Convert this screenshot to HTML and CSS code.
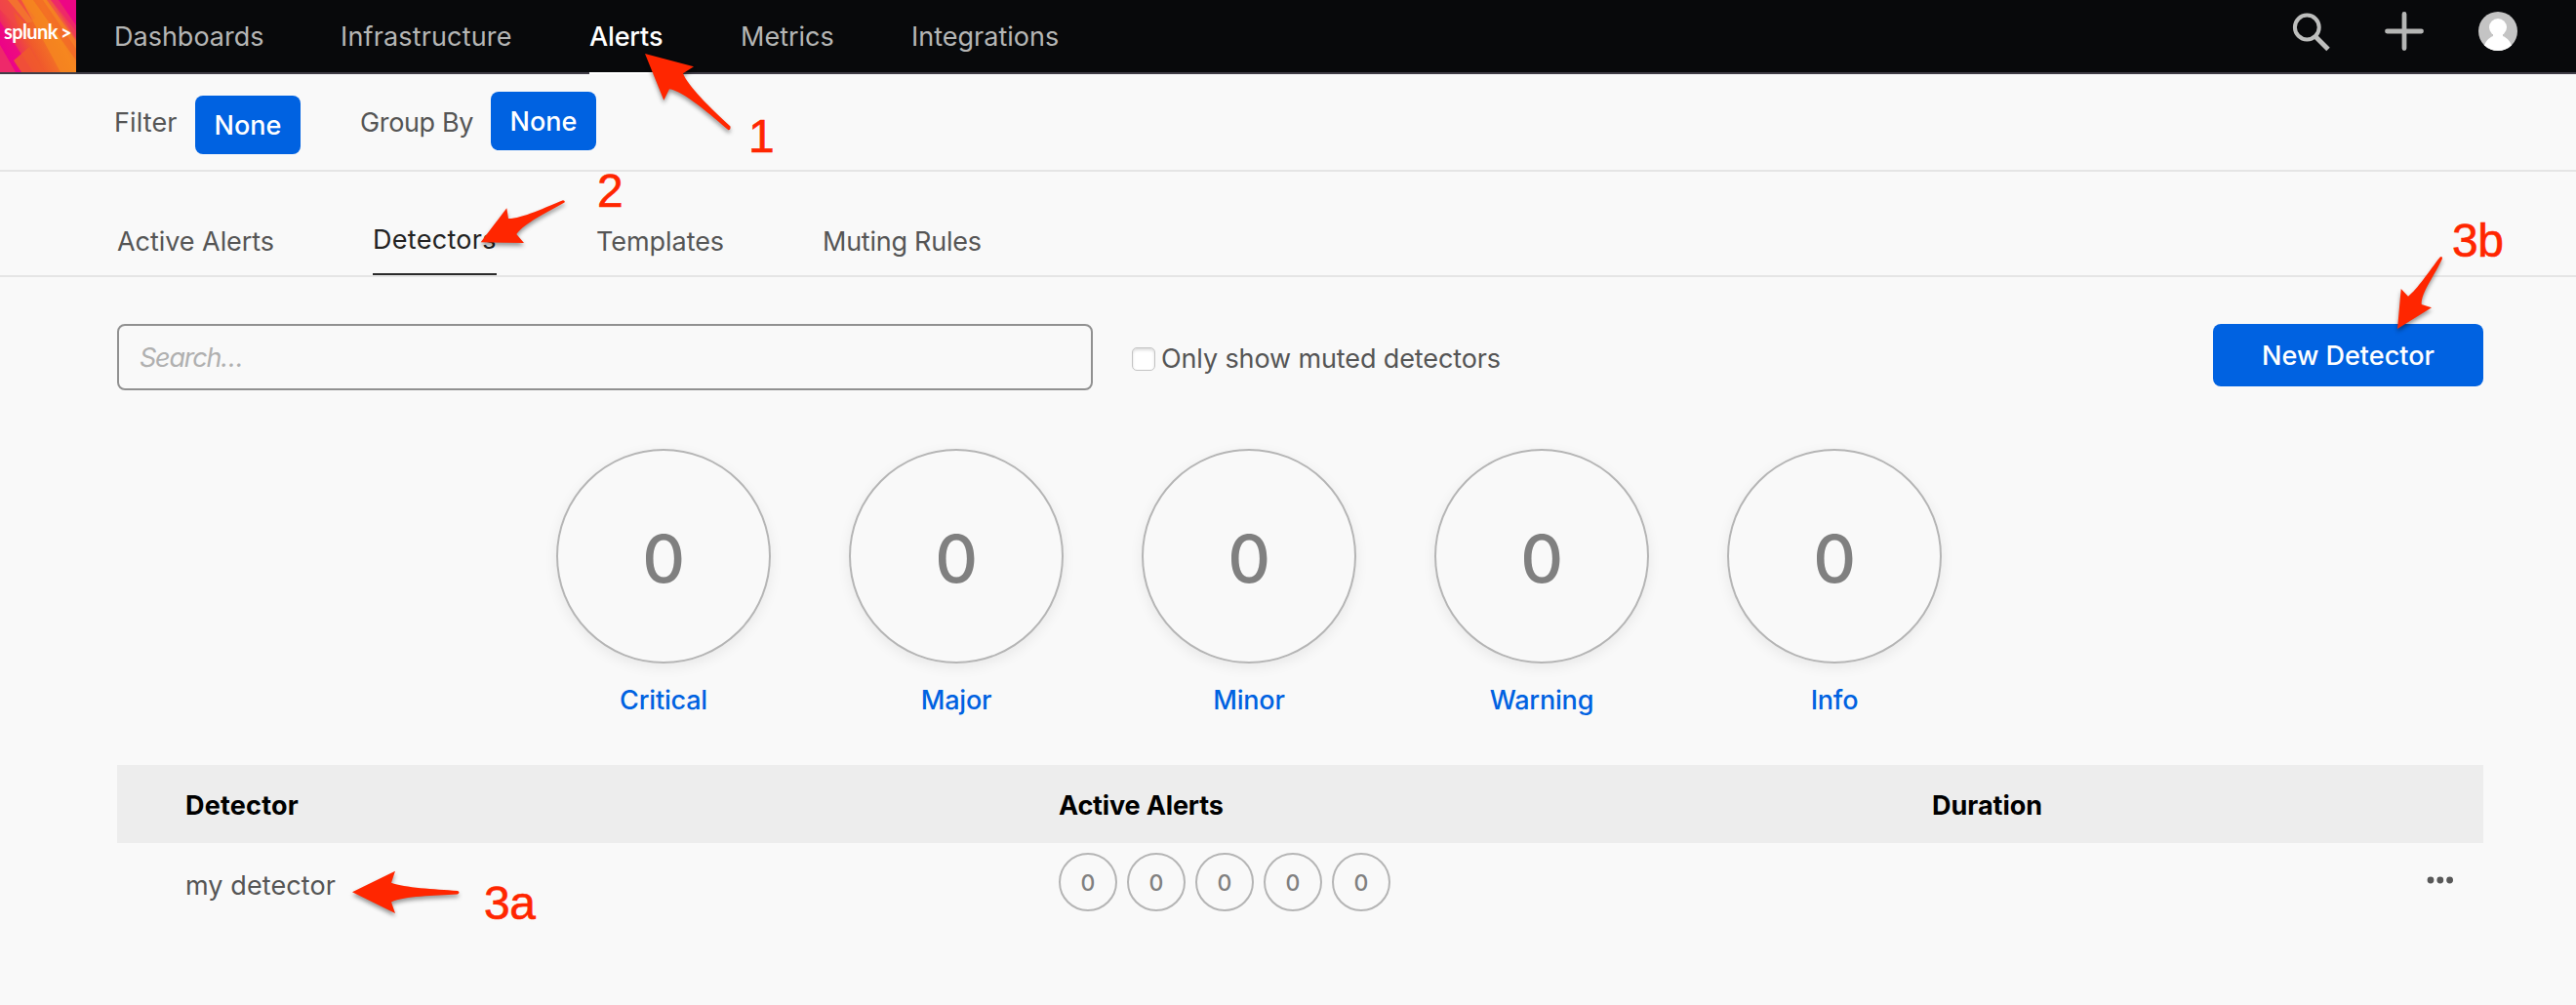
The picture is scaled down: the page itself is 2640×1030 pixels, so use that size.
FILE: index.html
```html
<!DOCTYPE html>
<html lang="en">
<head>
<meta charset="utf-8">
<title>Alerts - Detectors</title>
<link rel="stylesheet" href="styles.css">
</head>
<body>
<header class="topbar">
  <a class="logo">
    <svg class="logo-art" width="78" height="74" viewBox="0 0 78 74">
      <defs>
        <linearGradient id="base" x1="0" y1="0.62" x2="0.9" y2="0.2">
          <stop offset="0" stop-color="#ec0a80"/><stop offset="0.38" stop-color="#f05a2c"/><stop offset="0.75" stop-color="#f58220"/><stop offset="1" stop-color="#ee2d5a"/>
        </linearGradient>
      </defs>
      <rect width="78" height="74" fill="url(#base)"/>
      <path d="M0 0h22L36 18 28 26 14 12 18 28 0 10Z" fill="#f0474a" opacity=".75"/>
      <path d="M8 0h10L34 22 28 24Z" fill="#f47a2a" opacity=".8"/>
      <path d="M22 0h30L78 40V74H62Z" fill="#f6881f" opacity=".75"/>
      <path d="M34 0h10L78 50V62Z" fill="#f15a29" opacity=".5"/>
      <path d="M52 0h26V32Z" fill="#ec008c" opacity=".85"/>
      <path d="M48 0h12L78 26V42Z" fill="#ef3f56" opacity=".6"/>
      <path d="M0 22 34 74H0Z" fill="#ec008c" opacity=".75"/>
      <path d="M0 46 16 74H0Z" fill="#ef3a5c" opacity=".7"/>
      <path d="M14 62 30 48 46 74H22Z" fill="#f05a2c" opacity=".85"/>
    </svg>
    <span class="logo-text">splunk</span><span class="logo-caret">&gt;</span>
  </a>
  <nav class="nav">
    <a class="nav-item">Dashboards</a>
    <a class="nav-item wide">Infrastructure</a>
    <a class="nav-item active">Alerts</a>
    <a class="nav-item">Metrics</a>
    <a class="nav-item">Integrations</a>
  </nav>
  <div class="tools">
    <svg width="42" height="42" viewBox="0 0 42 42" fill="none" stroke="#bdbebd"><circle cx="16.3" cy="17" r="12.4" stroke-width="4"/><path d="M25 26.5 38 39.5" stroke-width="5"/></svg>
    <svg width="40" height="40" viewBox="0 0 40 40" fill="none" stroke="#b5b6b5" stroke-width="4.8" stroke-linecap="round"><path d="M20 2.5v35M2.5 20h35"/></svg>
    <svg width="40" height="40" viewBox="0 0 40 40"><defs><clipPath id="round"><circle cx="20" cy="20" r="20"/></clipPath></defs><g clip-path="url(#round)"><path d="M0 0h40v40H0z" fill="#c4c4c4"/><circle cx="20" cy="16" r="9" fill="#fff"/><path d="M15 22h10v3c5 2 8 6 10 12v3H5v-3c2-6 5-10 10-12Z" fill="#fff"/></g></svg>
  </div>
</header>

<section class="filters">
  <span class="filter-label">Filter</span><button class="pill low">None</button>
  <span class="filter-label group">Group By</span><button class="pill high">None</button>
</section>

<nav class="tabs">
  <a class="tab">Active Alerts</a>
  <a class="tab current">Detectors</a>
  <a class="tab">Templates</a>
  <a class="tab tight">Muting Rules</a>
</nav>

<main class="content">
  <div class="controls">
    <div class="search">Search…</div>
    <label class="muted"><span class="checkbox"></span><span>Only show muted detectors</span></label>
    <button class="new">New Detector</button>
  </div>

  <div class="summary">
    <div class="severity"><div class="ring">0</div><a>Critical</a></div>
    <div class="severity"><div class="ring">0</div><a>Major</a></div>
    <div class="severity"><div class="ring">0</div><a>Minor</a></div>
    <div class="severity"><div class="ring">0</div><a>Warning</a></div>
    <div class="severity"><div class="ring">0</div><a>Info</a></div>
  </div>

  <div class="table">
    <div class="row head"><span class="wide">Detector</span><span class="tight">Active Alerts</span><span>Duration</span></div>
    <div class="row">
      <span class="name">my detector</span>
      <div class="counts"><i>0</i><i>0</i><i>0</i><i>0</i><i>0</i></div>
      <svg class="more" width="28" height="8" viewBox="0 0 28 8" fill="#585858"><circle cx="4" cy="4" r="3.4"/><circle cx="13.8" cy="4" r="3.4"/><circle cx="23.6" cy="4" r="3.4"/></svg>
    </div>
  </div>
</main>

<div class="notes">
  <svg class="arrows" width="2640" height="1030" viewBox="0 0 2640 1030" fill="#ff2600">
    <path d="M661 55 711 68.300 700 75.300C705 88 727 110 748.500 129.500Q749 133 746.500 133.300C730 119 700 93 686 91.300L680.300 102.700Z"/>
    <path d="M492.700 248.300 519.300 213.300 521 224C535 224 560 212 577 205.200Q579.500 205.500 578.500 207.500C560 218 537 229 529.300 240L537 249Z"/>
    <path d="M2457 337 2460.700 296 2468 303.700C2477 297 2490 277 2500.700 263.500Q2503 262 2503 265C2496 281 2481 300 2481.700 312L2492 315.300Z"/>
    <path d="M361 914.300 405 892.700 401 904.700C415 910 445 911 469 913Q472 914.500 469 916.500C445 918 415 918 401 924.500L405 936Z"/>
  </svg>
  <span class="note n1">1</span>
  <span class="note n2">2</span>
  <span class="note n3a">3a</span>
  <span class="note n3b">3b</span>
</div>
</body>
</html>
```
FILE: styles.css
```css
* { box-sizing: border-box; }

body {
  margin: 0;
  height: 1030px;
  position: relative;
  overflow: hidden;
  background: #f9f9f9;
  color: #555;
  font: 27px/32px Inter, "Liberation Sans", sans-serif;
}

button {
  border: 0;
  padding: 2px 0 0;
  border-radius: 8px;
  background: #0062e1;
  color: #fff;
  font: inherit;
  font-weight: 500;
}

.topbar {
  display: flex;
  height: 76px;
  background: #08090b;
  border-bottom: 2px solid #403d47;
}

.logo { position: relative; width: 78px; height: 74px; margin-right: 39px; color: #fff; }
.logo-art { display: block; }
.logo-text, .logo-caret { position: absolute; top: 16px; font: 700 20px/32px Lato, sans-serif; }
.logo-text { left: 4px; letter-spacing: -0.600px; }
.logo-caret { left: 62px; top: 17px; }

.nav { display: grid; grid-template-columns: 232px 255px 155px 175px auto; flex: 1; justify-content: start; }
.nav-item { justify-self: start; height: 76px; line-height: 76px; color: #b5b6b5; }
.nav-item.active { color: #fff; font-weight: 500; width: 76px; border-bottom: 2px solid #fff; letter-spacing: -0.150px; }
.nav-item.wide { letter-spacing: 0.150px; }

.tools { display: flex; align-items: flex-start; gap: 56px; padding: 12px 60px 0 0; }
.tools svg:first-child { margin: -1px -2px 0 0; }

.filters {
  display: flex;
  align-items: center;
  height: 100px;
  padding-left: 117px;
  border-bottom: 2px solid #e5e5e5;
}
.filter-label { width: 83px; padding-top: 2px; letter-spacing: 0.100px; }
.filter-label.group { width: 134px; margin-left: 61px; letter-spacing: -0.350px; }
.pill { width: 108px; height: 60px; }
.pill.low { margin-top: 6px; }
.pill.high { margin-top: -2px; }

.tabs {
  display: grid;
  grid-template-columns: 262px 229px 232px auto;
  justify-content: start;
  height: 108px;
  padding: 56px 0 0 120px;
  border-bottom: 2px solid #e5e5e5;
}
.tab { letter-spacing: -0.050px; }
.tab.tight { letter-spacing: -0.250px; }
.tab.current {
  justify-self: start;
  width: 127px;
  height: 52px;
  margin-top: -2px;
  color: #222;
  letter-spacing: 0.300px;
  border-bottom: 2px solid #2b2b2b;
}

.content { padding: 48px 95px 0 120px; }

.controls { display: flex; align-items: flex-start; height: 128px; }
.search {
  width: 1000px;
  height: 68px;
  padding: 17px 21px;
  border: 2px solid #919191;
  border-radius: 8px;
  color: #b0b0b0;
  font-style: italic;
  letter-spacing: -1.200px;
}
.muted { display: flex; align-items: center; gap: 6px; height: 72px; margin-left: 40px; letter-spacing: -0.120px; }
.checkbox {
  width: 24px;
  height: 24px;
  border: 1px solid #c3c3c3;
  border-radius: 5px;
  background: #fff;
  box-shadow: inset 0 2px 3px #ddd;
}
.new { width: 277px; height: 64px; margin-left: auto; }

.summary { display: flex; gap: 80px; padding-left: 450px; height: 324px; }
.severity { width: 220px; text-align: center; color: #0062e1; font-weight: 500; letter-spacing: -0.200px; }
.severity a { display: block; margin-top: 22px; }
.ring {
  height: 220px;
  border: 2px solid #b5b5b5;
  border-radius: 50%;
  box-shadow: 0 4px 14px rgba(0, 0, 0, 0.070);
  color: #808080;
  font-size: 68px;
  line-height: 220px;
}

.row { display: grid; grid-template-columns: 895px 895px 1fr; align-items: center; height: 80px; padding-left: 70px; }
.head { background: #ededed; color: #000; font-weight: 700; line-height: 84px; }
.head .wide { letter-spacing: 0.200px; }
.head .tight { letter-spacing: -0.150px; }
.name { padding-top: 7px; letter-spacing: 0.100px; }
.counts { display: flex; gap: 10px; }
.counts i {
  width: 60px;
  height: 60px;
  border: 2px solid #b5b5b5;
  border-radius: 50%;
  color: #808080;
  font: 500 23px/58px Inter, sans-serif;
  text-align: center;
}
.more { justify-self: end; margin: -4px 30.500px 0 0; }

/* Callouts lie over the page */
.notes { position: absolute; inset: 0; pointer-events: none; }
.arrows { filter: drop-shadow(0 3px 2px rgba(0, 0, 0, 0.400)); }
.note { position: absolute; color: #ff2600; -webkit-text-stroke: 0.600px #ff2600; font: 48px/48px "Liberation Sans", Arial, sans-serif; letter-spacing: -0.500px; }
.n1 { left: 767px; top: 116px; }
.n2 { left: 612px; top: 172px; }
.n3a { left: 496px; top: 902px; }
.n3b { left: 2513px; top: 223px; }
```
